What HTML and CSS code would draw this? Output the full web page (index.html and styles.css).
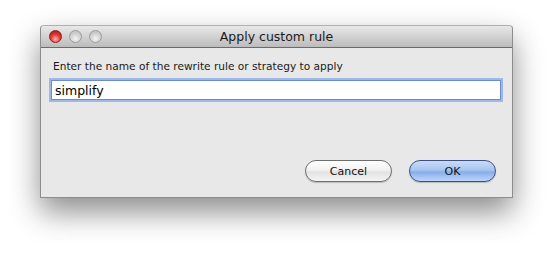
FILE: index.html
```html
<!DOCTYPE html>
<html lang="en">
<head>
    <meta charset="UTF-8">
    <title>Apply custom rule</title>
    <link rel="stylesheet" href="styles.css">
</head>
<body>

    <div class="window">
        <div class="titlebar">
            <div class="lights">
                <span class="light close"></span>
                <span class="light"></span>
                <span class="light"></span>
            </div>
            <div class="title">Apply custom rule</div>
        </div>

        <div class="content">
            <label for="rule">Enter the name of the rewrite rule or strategy to apply</label>
            <input type="text" id="rule" value="simplify">

            <div class="buttons">
                <button class="btn">Cancel</button>
                <button class="btn default">OK</button>
            </div>
        </div>
    </div>

</body>
</html>
```

FILE: styles.css
```css
html {
    height: 100%;
}
body {
    font-family: "DejaVu Sans", sans-serif;
    background-color: #ffffff;
    margin: 0;
    padding: 25px 39px 0 40px;
    min-height: 100%;
    box-sizing: border-box;
}
.window {
    width: 471px;
    height: 171px;
    background: #e8e8e8;
    border: 1px solid #8c8c8c;
    border-top-color: #b0b0b0;
    border-radius: 4px 4px 0 0;
    box-shadow: 0 14px 30px rgba(0,0,0,0.45);
    display: flex;
    flex-direction: column;
}
.titlebar {
    height: 21px;
    background: linear-gradient(#e8e8e8, #bcbcbc);
    border-bottom: 1px solid #6b6b6b;
    border-radius: 4px 4px 0 0;
    display: flex;
    align-items: center;
    position: relative;
}
.lights {
    display: flex;
    gap: 7px;
    padding-left: 8px;
}
.light {
    width: 13px;
    height: 13px;
    border-radius: 50%;
    border: 1px solid #9c9c9c;
    background: radial-gradient(circle at 50% 70%, #f4f4f4, #c6c6c6 70%);
    box-sizing: border-box;
}
.light.close {
    border-color: #8a1e1e;
    background: radial-gradient(circle at 50% 75%, #ffb0a8, #e0403a 45%, #a81a16 90%);
}
.title {
    position: absolute;
    left: 0;
    right: 0;
    text-align: center;
    font-size: 12.5px;
    color: #1a1a1a;
    pointer-events: none;
}
.content {
    padding: 12px 0 0 10px;
    display: flex;
    flex-direction: column;
}
label {
    font-size: 10.6px;
    line-height: 13px;
    color: #1a1a1a;
    margin-left: 2px;
    margin-bottom: 7px;
}
input[type="text"] {
    height: 20px;
    width: 450px;
    margin: 0;
    padding: 0 3px;
    font-family: "DejaVu Sans", sans-serif;
    font-size: 12.5px;
    color: #000;
    border: 1px solid #6c8ccc;
    outline: none;
    box-shadow: 0 0 0 2px #9fb9e6;
    background: #fff;
    box-sizing: border-box;
}
.buttons {
    display: flex;
    justify-content: flex-end;
    gap: 17px;
    margin-top: 60px;
    padding-right: 16px;
}
.btn {
    width: 87px;
    height: 22px;
    border-radius: 11px;
    border: 1px solid #6e6e6e;
    background: linear-gradient(#ffffff 0%, #f2f2f2 45%, #e2e2e2 55%, #f4f4f4 100%);
    font-family: "DejaVu Sans", sans-serif;
    font-size: 11px;
    color: #111;
    padding: 0;
    box-shadow: 0 1px 1px rgba(0,0,0,0.2);
}
.btn.default {
    border-color: #3c4f8a;
    background: linear-gradient(#c9dcf7 0%, #a7c5f0 45%, #86aeea 55%, #bcd6fa 100%);
}
```
